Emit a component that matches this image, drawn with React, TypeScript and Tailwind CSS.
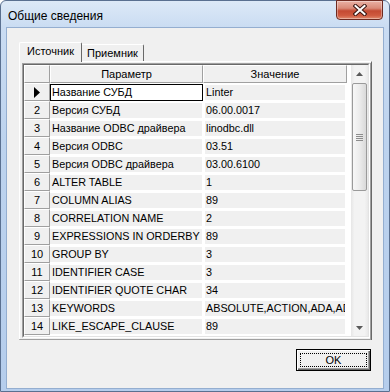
const rows: [string, string][] = [
  ["Название СУБД", "Linter"],
  ["Версия СУБД", "06.00.0017"],
  ["Название ODBC драйвера", "linodbc.dll"],
  ["Версия ODBC", "03.51"],
  ["Версия ODBC драйвера", "03.00.6100"],
  ["ALTER TABLE", "1"],
  ["COLUMN ALIAS", "89"],
  ["CORRELATION NAME", "2"],
  ["EXPRESSIONS IN ORDERBY", "89"],
  ["GROUP BY", "3"],
  ["IDENTIFIER CASE", "3"],
  ["IDENTIFIER QUOTE CHAR", "34"],
  ["KEYWORDS", "ABSOLUTE,ACTION,ADA,ADD"],
  ["LIKE_ESCAPE_CLAUSE", "89"],
];

const fixedCell =
  "border border-t-white border-l-white border-r-[#a0a0a0] border-b-[#a0a0a0] bg-[#f0f0f0]";

function CloseButton() {
  return (
    <div className="-mt-px ml-auto mr-[6px] flex h-[20px] w-[47px] items-center justify-center rounded-b-[4px] border border-[#6e2a20] bg-[linear-gradient(to_bottom,#eab1a4_0%,#d98a78_40%,#c44a32_55%,#cf5a3f_80%,#e08a6e_100%)] shadow-[inset_0_0_0_1px_rgba(255,255,255,0.35)]">
      <svg width="14" height="12" viewBox="0 0 14 12">
        <path d="M2.5 2 L11.5 10 M11.5 2 L2.5 10" stroke="#3a1510" strokeWidth="4" strokeLinecap="square" />
        <path d="M2.5 2 L11.5 10 M11.5 2 L2.5 10" stroke="#ffffff" strokeWidth="2" strokeLinecap="square" />
      </svg>
    </div>
  );
}

function Arrow({ up }: { up?: boolean }) {
  return (
    <div className="flex h-[17px] items-center justify-center">
      <svg width="7" height="4" viewBox="0 0 7 4">
        <polygon points={up ? "0,4 3.5,0 7,4" : "0,0 3.5,4 7,0"} fill="#5a5a5a" />
      </svg>
    </div>
  );
}

function ScrollBar() {
  return (
    <div className="flex h-full w-[17px] flex-col bg-[linear-gradient(to_right,#e6e6e6,#f3f3f3_20%,#f3f3f3_80%,#e9e9e9)]">
      <Arrow up />
      <div className="ml-px mt-px flex h-[108px] w-[15px] flex-col items-center justify-center gap-px rounded-[2px] border border-[#9a9a9a] bg-[linear-gradient(to_right,#f7f7f7,#ececec_50%,#d9d9d9)]">
        <div className="h-px w-[7px] bg-[#8c8c8c]" />
        <div className="h-px w-[7px] bg-[#8c8c8c]" />
        <div className="h-px w-[7px] bg-[#8c8c8c]" />
        <div className="h-px w-[7px] bg-[#8c8c8c]" />
      </div>
      <div className="mt-auto">
        <Arrow />
      </div>
    </div>
  );
}

function Grid() {
  return (
    <div className="ml-[2px] mt-px h-[275px] w-[348px] border border-t-[#a0a0a0] border-l-[#a0a0a0] border-r-white border-b-white">
      <div className="flex h-full border border-t-[#696969] border-l-[#696969] border-r-[#e3e3e3] border-b-[#e3e3e3] bg-white">
        <div className="w-[327px]">
          <div className="flex h-[18px] text-[11px] leading-[16px]">
            <div className={`w-[26px] ${fixedCell}`} />
            <div className={`w-[153px] text-center ${fixedCell}`}>Параметр</div>
            <div className={`w-[144px] text-center ${fixedCell}`}>Значение</div>
          </div>
          {rows.map(([name, value], i) => (
            <div key={i} className="flex h-[18px] text-[10.8px] leading-[15px]">
              <div className={`flex w-[26px] items-center justify-center text-[11px] leading-[16px] ${fixedCell}`}>
                {i === 0 ? (
                  <svg width="6" height="11" viewBox="0 0 6 11">
                    <polygon points="0,0 6,5.5 0,11" fill="#000" />
                  </svg>
                ) : (
                  i + 1
                )}
              </div>
              <div className="w-[153px]">
                {i === 0 ? (
                  <div className="mt-px h-[17px] border border-black bg-white pl-px">{name}</div>
                ) : (
                  <div className="mr-px mt-[2px] h-[15px] overflow-hidden whitespace-nowrap bg-[#f0f0f0] pl-[2px]">
                    {name}
                  </div>
                )}
              </div>
              <div className="w-[144px] px-[2px]">
                <div className="mt-[2px] h-[15px] overflow-hidden whitespace-nowrap bg-[#f0f0f0] pl-px">
                  {value}
                </div>
              </div>
            </div>
          ))}
        </div>
        <ScrollBar />
      </div>
    </div>
  );
}

export default function App() {
  return (
    <div className="h-[392px] w-[390px] overflow-hidden bg-white">
      <div className="flex h-[392px] w-[390px] flex-col rounded-t-[6px] border border-[#5a7090] bg-[linear-gradient(to_bottom,#dde9f7_0px,#cadcf2_26px,#bdd3ee_140px,#b5cdec_100%)] font-['Liberation_Sans',Arial,sans-serif] text-black">
        {/* title bar */}
        <div className="flex h-[26px] shrink-0 items-start">
          <span className="pl-[7px] pt-[9px] text-[12px] leading-[12px]">Общие сведения</span>
          <CloseButton />
        </div>

        <div className="flex flex-1 px-[5px] pb-[2px]">
          <div className="flex-1 border border-[#94aed0] bg-[#f0f0f0]">
            <div className="ml-[12px] mt-[14px] w-[353px]">
              {/* tabs */}
              <div className="flex items-end text-[11px] leading-[11px]">
                <div className="relative z-10 h-[20px] w-[63px] rounded-t-[2px] border-l border-t border-r border-l-white border-t-white border-r-[#696969] bg-[#f0f0f0] pt-[3px] text-center">
                  Источник
                </div>
                <div className="h-[18px] w-[62px] rounded-tr-[2px] border-t border-r border-t-white border-r-[#696969] bg-[#f0f0f0] pt-[3px] text-center">
                  Приемник
                </div>
              </div>
              {/* tab sheet */}
              <div className="relative z-[5] -mt-px h-[279px] border border-l-white border-t-white border-r-[#696969] border-b-[#696969]">
                <div className="h-full border-r border-b border-r-[#a0a0a0] border-b-[#a0a0a0]">
                  <Grid />
                </div>
              </div>
              {/* button row */}
              <div className="mt-[9px] flex justify-end">
                <div className="mr-px h-[22px] w-[75px] border border-black bg-[#f0f0f0] p-[3px] shadow-[inset_1px_1px_0_#ffffff,inset_-1px_-1px_0_#696969,inset_-2px_-2px_0_#a0a0a0]">
                  <div className="flex h-full items-center justify-center border border-dotted border-black text-[11px] leading-[12px]">
                    OK
                  </div>
                </div>
              </div>
            </div>
          </div>
        </div>
      </div>
    </div>
  );
}
